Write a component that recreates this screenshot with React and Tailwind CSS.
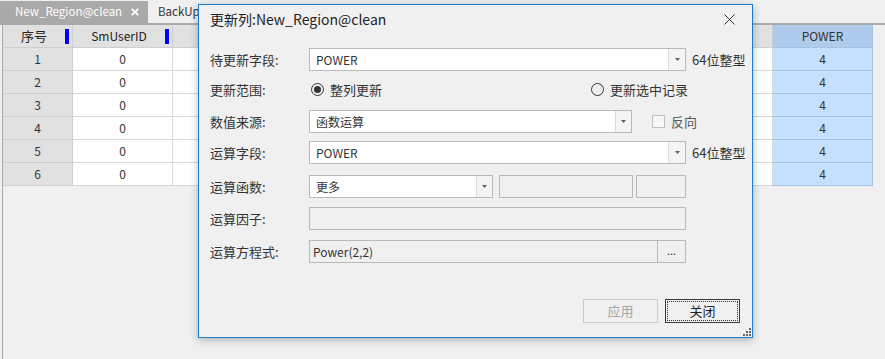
import React from "react";

const FONT = "font-['Noto_Sans_CJK_SC',sans-serif]";

function Arrow() {
  return (
    <svg width="5" height="3" viewBox="0 0 5 3">
      <path d="M0 0h5L2.5 3z" fill="#606060" />
    </svg>
  );
}

function Combo({ w, text, btn }) {
  return (
    <div className={`flex h-[23px] border border-[#b9b9b9] bg-white ${w}`}>
      <div className="flex flex-1 items-center pl-[6px] text-[12px] text-[#333]">{text}</div>
      <div className={`flex items-center justify-center border-l border-[#dcdcdc] bg-[#f4f4f4] ${btn}`}>
        <Arrow />
      </div>
    </div>
  );
}

function Row({ label, mt, children }) {
  return (
    <div className={`flex h-[23px] items-center ${mt}`}>
      <div className="w-[99px] text-[13px] text-[#333]">{label}</div>
      {children}
    </div>
  );
}

function Radio({ checked }) {
  return (
    <div className="flex h-[13px] w-[13px] items-center justify-center rounded-full border border-[#333] bg-[#f0f0f0]">
      {checked && <div className="h-[7px] w-[7px] rounded-full bg-[#333]" />}
    </div>
  );
}

const rows = [1, 2, 3, 4, 5, 6];

export default function App() {
  return (
    <div className={`relative h-[359px] w-[885px] overflow-hidden bg-[#f0f0f0] ${FONT}`}>
      {/* tab bar */}
      <div className="flex h-[25px] items-end border-b-2 border-[#a9a9a9]">
        <div className="flex h-[22px] w-[148px] items-center bg-[#a9a9a9] pl-[15px] pr-[9px] text-[11.5px] text-white">
          <span className="flex-1">New_Region@clean</span>
          <svg width="8" height="8" viewBox="0 0 8 8">
            <path d="M0.8 0.8L7.2 7.2M7.2 0.8L0.8 7.2" stroke="#fff" strokeWidth="1.8" />
          </svg>
        </div>
        <div className="flex h-[22px] items-center pl-[10px] text-[11.5px] text-[#333]">BackUp_</div>
      </div>

      {/* table */}
      <div className="ml-[2px] h-[334px] border-l border-[#a9a9a9]">
        <div className="flex h-[23px]">
          <div className="flex w-[70px] items-center border-b border-r border-[#cfcfcf] bg-[#e1e1e1]">
            <span className="flex-1 text-center text-[13px] text-[#222]">序号</span>
            <div className="mr-[3px] h-[15px] w-[4px] bg-[#0000ff]" />
          </div>
          <div className="flex w-[100px] items-center border-b border-r border-[#cfcfcf] bg-[#e1e1e1]">
            <span className="flex-1 text-center text-[12px] text-[#222]">SmUserID</span>
            <div className="mr-[3px] h-[15px] w-[4px] bg-[#0000ff]" />
          </div>
          <div className="w-[600px] border-b border-r border-[#cfcfcf] bg-[#e1e1e1]" />
          <div className="flex w-[100px] items-center justify-center border-b border-r border-[#a4c2e4] bg-[#aecbeb] text-[12px] text-[#333]">
            POWER
          </div>
        </div>
        {rows.map((r) => (
          <div key={r} className="flex h-[23px] text-[12px] text-[#333]">
            <div className="flex w-[70px] items-center justify-center border-b border-r border-[#cfcfcf] bg-[#e1e1e1]">{r}</div>
            <div className="flex w-[100px] items-center justify-center border-b border-r border-[#d8d8d8] bg-white">0</div>
            <div className="w-[600px] border-b border-r border-[#d8d8d8] bg-white" />
            <div className="flex w-[100px] items-center justify-center border-b border-r border-[#a4c2e4] bg-[#c5e0fc]">4</div>
          </div>
        ))}
      </div>

      {/* dialog */}
      <div className="absolute left-[198px] top-[4px] flex h-[334px] w-[555px] flex-col border border-[#1a7bd3] bg-[#f0f0f0] shadow-[0_2px_8px_rgba(0,0,0,0.28)]">
        <div className="flex h-[29px] items-center pl-[11px] pr-[17px]">
          <span className="flex-1 text-[14px] text-[#1e1e1e]">更新列:New_Region@clean</span>
          <svg width="11" height="11" viewBox="0 0 11 11">
            <path d="M0.5 0.5L10.5 10.5M10.5 0.5L0.5 10.5" stroke="#333" strokeWidth="1" />
          </svg>
        </div>
        <div className="flex flex-col pl-[11px]">
          <Row label="待更新字段:" mt="mt-[14px]">
            <Combo w="w-[377px]" text="POWER" btn="w-[17px]" />
            <span className="ml-[6px] text-[13px] text-[#333]">64位整型</span>
          </Row>
          <Row label="更新范围:" mt="mt-[7px]">
            <div className="flex w-[282px] items-center pl-[2px]">
              <Radio checked />
              <span className="ml-[6px] text-[13px] text-[#333]">整列更新</span>
            </div>
            <div className="flex items-center">
              <Radio />
              <span className="ml-[6px] text-[13px] text-[#333]">更新选中记录</span>
            </div>
          </Row>
          <Row label="数值来源:" mt="mt-[9px]">
            <Combo w="w-[323px]" text="函数运算" btn="w-[16px]" />
            <div className="ml-[20px] h-[13px] w-[13px] border border-[#c0c0c0] bg-[#f7f7f7]" />
            <span className="ml-[6px] text-[13px] text-[#555]">反向</span>
          </Row>
          <Row label="运算字段:" mt="mt-[8px]">
            <Combo w="w-[377px]" text="POWER" btn="w-[17px]" />
            <span className="ml-[6px] text-[13px] text-[#333]">64位整型</span>
          </Row>
          <Row label="运算函数:" mt="mt-[11px]">
            <Combo w="w-[184px]" text="更多" btn="w-[16px]" />
            <div className="ml-[6px] h-[23px] w-[134px] border border-[#b9b9b9] bg-[#f0f0f0]" />
            <div className="ml-[3px] h-[23px] w-[50px] border border-[#b9b9b9] bg-[#f0f0f0]" />
          </Row>
          <Row label="运算因子:" mt="mt-[9px]">
            <div className="h-[23px] w-[377px] border border-[#b9b9b9] bg-[#f0f0f0]" />
          </Row>
          <Row label="运算方程式:" mt="mt-[10px]">
            <div className="flex h-[23px] w-[377px] border border-[#b9b9b9] bg-[#f0f0f0]">
              <div className="flex flex-1 items-center pl-[3px] text-[12px] text-[#333]">Power(2,2)</div>
              <div className="flex w-[28px] items-center justify-center border-l border-[#b9b9b9] pb-[2px] text-[11px] text-[#333]">...</div>
            </div>
          </Row>
          <div className="mt-[36px] flex justify-end gap-[7px] pr-[12px]">
            <div className="flex h-[24px] w-[75px] items-center justify-center border border-[#cccccc] bg-[#f0f0f0] text-[13px] text-[#a6a6a6]">
              应用
            </div>
            <div className="flex h-[24px] w-[75px] items-center justify-center border border-[#3c3c3c] bg-[#f0f0f0] p-[1px]">
              <div className="flex h-full w-full items-center justify-center border border-dotted border-[#333] text-[13px] text-[#222]">
                关闭
              </div>
            </div>
          </div>
        </div>
        <svg className="absolute bottom-[1px] right-[1px]" width="8" height="8" viewBox="0 0 8 8">
          <rect x="6" y="0" width="2" height="2" fill="#666" />
          <rect x="3" y="3" width="2" height="2" fill="#666" />
          <rect x="6" y="3" width="2" height="2" fill="#666" />
          <rect x="0" y="6" width="2" height="2" fill="#666" />
          <rect x="3" y="6" width="2" height="2" fill="#666" />
          <rect x="6" y="6" width="2" height="2" fill="#666" />
        </svg>
      </div>
    </div>
  );
}
